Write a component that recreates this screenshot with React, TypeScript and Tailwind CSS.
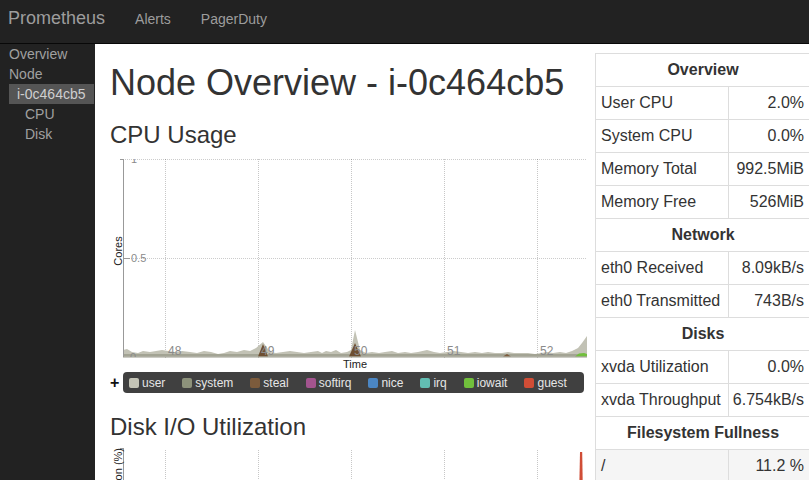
import React from "react";

type Row = { label: string; value?: string; header?: boolean; shaded?: boolean };

const statRows: Row[] = [
  { label: "Overview", header: true },
  { label: "User CPU", value: "2.0%" },
  { label: "System CPU", value: "0.0%" },
  { label: "Memory Total", value: "992.5MiB" },
  { label: "Memory Free", value: "526MiB" },
  { label: "Network", header: true },
  { label: "eth0 Received", value: "8.09kB/s" },
  { label: "eth0 Transmitted", value: "743B/s" },
  { label: "Disks", header: true },
  { label: "xvda Utilization", value: "0.0%" },
  { label: "xvda Throughput", value: "6.754kB/s" },
  { label: "Filesystem Fullness", header: true },
  { label: "/", value: "11.2 %", shaded: true },
];

const legend = [
  { name: "user", color: "#c4c4b6" },
  { name: "system", color: "#8d927b" },
  { name: "steal", color: "#7c5b3c" },
  { name: "softirq", color: "#a3548f" },
  { name: "nice", color: "#4b86c3" },
  { name: "irq", color: "#62bdb2" },
  { name: "iowait", color: "#71bf3c" },
  { name: "guest", color: "#d04d36" },
];

// top edge of the stacked cpu area, page coords
const cpuTop: [number, number][] = [
  [123, 350], [127, 349], [132, 352], [138, 353], [143, 351], [150, 352], [156, 351], [162, 350],
  [168, 351], [175, 352], [182, 351], [190, 352], [197, 353], [204, 351], [211, 352], [218, 354],
  [224, 353], [230, 351], [237, 352], [244, 350], [250, 351], [256, 348], [263, 342], [270, 352],
  [276, 353], [283, 352], [290, 351], [297, 352], [304, 353], [311, 352], [318, 351], [322, 353],
  [326, 351], [331, 352], [336, 350], [341, 353], [347, 352], [351, 350], [355, 330], [360, 350],
  [366, 353], [372, 352], [379, 353], [385, 352], [392, 351], [398, 353], [405, 352], [411, 353],
  [418, 352], [427, 350], [434, 352], [440, 353], [447, 352], [454, 351], [461, 352], [468, 353],
  [475, 352], [482, 353], [488, 352], [495, 353], [502, 353], [508, 352], [514, 353], [521, 353],
  [528, 353], [535, 354], [541, 353], [547, 352], [553, 353], [560, 352], [566, 353], [572, 351],
  [578, 348], [582, 343], [587, 336],
];

const gridX = [165, 258, 351, 444, 537];
const tickLabels = ["48", "49", "50", "51", "52"];

function areaPath(points: [number, number][], base: number) {
  const first = points[0][0];
  const last = points[points.length - 1][0];
  return `M${first},${base} ` + points.map(([x, y]) => `L${x},${y}`).join(" ") + ` L${last},${base} Z`;
}

function CpuChart() {
  return (
    <svg width={477} height={212} viewBox="110 158 477 212" className="block">
      <defs>
        <clipPath id="plot">
          <rect x={110} y={159} width={477} height={198} />
        </clipPath>
      </defs>
      {/* grid */}
      <line x1={123} y1={159.5} x2={587} y2={159.5} stroke="#000" strokeOpacity={0.2} strokeDasharray="1 1" />
      <line x1={123} y1={258.5} x2={587} y2={258.5} stroke="#000" strokeOpacity={0.2} strokeDasharray="1 1" />
      {gridX.map((x) => (
        <line key={x} x1={x + 0.5} y1={159} x2={x + 0.5} y2={359} stroke="#000" strokeOpacity={0.22} strokeDasharray="1 1" />
      ))}

      {/* stacked areas */}
      <path d={areaPath(cpuTop, 356.5)} fill="#c2c2b5" />
      <path d="M123,356.5 L123,354 L587,354 L587,356.5 Z" fill="#a3a494" />
      <path d="M258,356.5 L263,344 L268,356.5 Z" fill="#6e4f31" />
      <path d="M349,356.5 L355,343 L361,356.5 Z" fill="#6e4f31" />
      <path d="M503,356.5 L507,354 L511,356.5 Z" fill="#7c5b3c" />
      <path d="M575,356.5 L579,353.5 L584,353 L587,354 L587,356.5 Z" fill="#71bf3c" />

      {/* axes */}
      <line x1={123.5} y1={159} x2={123.5} y2={357} stroke="#999" />
      <line x1={120} y1={159.5} x2={123.5} y2={159.5} stroke="#999" />
      <line x1={123} y1={357} x2={587} y2={357} stroke="#9a9a8c" />
      <line x1={124} y1={258.5} x2={130} y2={258.5} stroke="#999" />

      <g clipPath="url(#plot)" fontSize={11} fill="#8a8a8a">
        <text x={131} y={163}>1</text>
        <text x={131} y={262}>0.5</text>
        <text x={130} y={361}>0</text>
      </g>
      <g fontSize={12} fill="#8a8a8a">
        {gridX.map((x, i) => (
          <text key={x} x={x + 3} y={355}>
            {tickLabels[i]}
          </text>
        ))}
      </g>

      <text transform="translate(121.5,251) rotate(-90)" textAnchor="middle" fontSize={11} fill="#222">
        Cores
      </text>
      <text x={355} y={368} textAnchor="middle" fontSize={11} fill="#222">
        Time
      </text>
    </svg>
  );
}

function DiskChart() {
  return (
    <svg width={477} height={60} viewBox="110 440 477 60" className="block">
      {gridX.map((x) => (
        <line key={x} x1={x + 0.5} y1={450} x2={x + 0.5} y2={500} stroke="#000" strokeOpacity={0.22} strokeDasharray="1 1" />
      ))}
      <line x1={123.5} y1={448} x2={123.5} y2={500} stroke="#999" />
      <line x1={120} y1={448.5} x2={123.5} y2={448.5} stroke="#999" />
      <path d="M579,500 L580,452 L582.2,452 L583,500 Z" fill="#d04d36" />
      <text transform="translate(121.5,448) rotate(-90)" textAnchor="end" fontSize={11} fill="#222">
        Utilization (%)
      </text>
    </svg>
  );
}

export default function App() {
  return (
    <div className="flex h-screen flex-col overflow-hidden bg-white font-['Liberation_Sans',Arial,sans-serif] text-[#333]">
      <nav className="flex h-[44px] shrink-0 items-start border-b border-[#080808] bg-[#222]">
        <span className="ml-[8px] pt-[8px] text-[18px] leading-[20px] text-[#9d9d9d]">Prometheus</span>
        <span className="ml-[30px] pt-[9px] text-[14px] leading-[20px] text-[#9d9d9d]">Alerts</span>
        <span className="ml-[30px] pt-[9px] text-[14px] leading-[20px] text-[#9d9d9d]">PagerDuty</span>
      </nav>

      <div className="flex min-h-0 flex-1">
        <aside className="w-[95px] shrink-0 bg-[#222] text-[14px] leading-[20px] text-[#a0a0a0]">
          <div className="pl-[9px]">Overview</div>
          <div className="pl-[9px]">Node</div>
          <div className="ml-[9px] mr-[1px] bg-[#555] pl-[8px] text-[#cfcfcf]">i-0c464cb5</div>
          <div className="pl-[25px]">CPU</div>
          <div className="pl-[25px]">Disk</div>
        </aside>

        <main className="min-w-0 flex-1 px-[15px]">
          <h1 className="mt-[19px] text-[36px] leading-[40px] font-normal">Node Overview - i-0c464cb5</h1>
          <h2 className="mt-[19px] text-[24px] leading-[26px] font-normal">CPU Usage</h2>
          <div className="mt-[10px]">
            <CpuChart />
          </div>
          <div className="mt-[2px] flex items-center">
            <span className="w-[13px] shrink-0 text-[16px] leading-[21px] font-bold text-[#111]">+</span>
            <div className="flex h-[21px] w-[461px] shrink-0 items-center gap-[17px] rounded-[4px] bg-[#404040] pl-[6px] text-[12px] text-[#e6e6e6]">
              {legend.map((item) => (
                <span key={item.name} className="flex items-center gap-[3px]">
                  <span className="h-[10px] w-[10px] rounded-[2px]" style={{ backgroundColor: item.color }} />
                  {item.name}
                </span>
              ))}
            </div>
          </div>
          <h2 className="mt-[21px] text-[24px] leading-[26px] font-normal">Disk I/O Utilization</h2>
          <DiskChart />
        </main>

        <div className="w-[214px] shrink-0 pt-[9px]">
          <table className="w-[216px] border-collapse text-[16px] leading-[22px] text-[#333]">
            <tbody>
              {statRows.map((row) =>
                row.header ? (
                  <tr key={row.label}>
                    <td colSpan={2} className="border border-[#ddd] py-[5px] text-center font-bold">
                      {row.label}
                    </td>
                  </tr>
                ) : (
                  <tr key={row.label} className={row.shaded ? "bg-[#f5f5f5]" : ""}>
                    <td className="w-[133px] border border-[#ddd] py-[5px] pl-[5px] whitespace-nowrap">{row.label}</td>
                    <td className="border border-[#ddd] py-[5px] pr-[6px] text-right whitespace-nowrap">{row.value}</td>
                  </tr>
                )
              )}
            </tbody>
          </table>
        </div>
      </div>
    </div>
  );
}
